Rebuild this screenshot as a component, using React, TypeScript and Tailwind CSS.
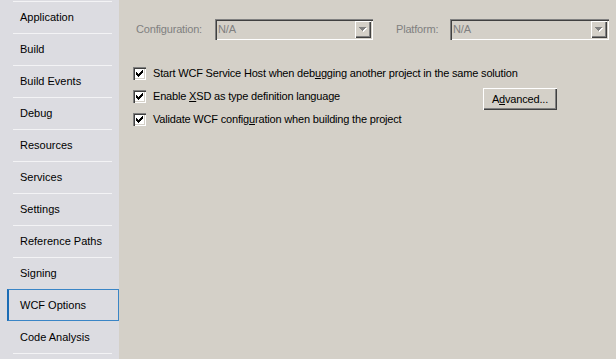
import React from 'react';

const pages = [
  'Application',
  'Build',
  'Build Events',
  'Debug',
  'Resources',
  'Services',
  'Settings',
  'Reference Paths',
  'Signing',
  'WCF Options',
  'Code Analysis',
];

const SELECTED = 'WCF Options';

function Check() {
  // classic 7x7 check bitmap
  const rows = ['......X', '.....XX', 'X...XXX', 'XX.XXX.', 'XXXXX..', '.XXX...', '..X....'];
  return (
    <svg width="7" height="7" viewBox="0 0 7 7" shapeRendering="crispEdges">
      {rows.map((r, y) =>
        r.split('').map((c, x) =>
          c === 'X' ? <rect key={`${x}-${y}`} x={x} y={y} width="1" height="1" fill="#000" /> : null
        )
      )}
    </svg>
  );
}

function CheckBox() {
  return (
    <div className="w-[13px] h-[13px] shrink-0 bg-white flex items-center justify-center shadow-[inset_1px_1px_0_#808080,inset_2px_2px_0_#404040,inset_-1px_-1px_0_#ffffff,inset_-2px_-2px_0_#d4d0c8]">
      <Check />
    </div>
  );
}

function ComboBox({ width }: { width: string }) {
  return (
    <div
      className={`${width} h-[21px] flex items-stretch p-[2px] bg-[#d4d0c8] shadow-[inset_1px_1px_0_#808080,inset_2px_2px_0_#404040,inset_-1px_-1px_0_#ffffff,inset_-2px_-2px_0_#d4d0c8]`}
    >
      <div className="flex-1 flex items-center pl-[1px] text-[#808080]">N/A</div>
      <div className="w-[16px] flex items-center justify-center bg-[#d4d0c8] shadow-[inset_1px_1px_0_#ffffff,inset_-1px_-1px_0_#404040,inset_-2px_-2px_0_#808080]">
        <svg width="8" height="5" viewBox="0 0 8 5" shapeRendering="crispEdges">
          <path d="M1 1h7v1h-1v1h-1v1h-1v1h-1v-1h-1v-1h-1v-1h-1z" fill="#ffffff" />
          <path d="M0 0h7v1h-1v1h-1v1h-1v1h-1v-1h-1v-1h-1v-1h-1z" fill="#808080" />
        </svg>
      </div>
    </div>
  );
}

export default function App() {
  const selIdx = pages.indexOf(SELECTED);

  return (
    <div className="w-[616px] h-[359px] flex overflow-hidden text-[11px] leading-none text-black font-['Liberation_Sans',Arial,sans-serif]">
      {/* Page list */}
      <div className="w-[119px] shrink-0 bg-[#dcdce1] flex flex-col">
        <div className="h-px" />
        {pages.map((name, i) => {
          const selected = i === selIdx;
          const hideSep = i - 1 === selIdx;
          if (selected) {
            return (
              <div
                key={name}
                className="ml-[7px] w-[112px] h-[32px] flex items-center pl-[11px] border border-l-2 border-[#3a85c6] border-l-[#1b6cb5]"
              >
                {name}
              </div>
            );
          }
          return (
            <React.Fragment key={name}>
              <div className={`h-px ml-[13px] w-[99px] ${hideSep ? '' : 'bg-[#f3f3f5]'}`} />
              <div className="h-[31px] flex items-center pl-[20px]">{name}</div>
            </React.Fragment>
          );
        })}
        <div className="h-px ml-[13px] w-[99px] bg-[#f3f3f5]" />
      </div>

      {/* Options panel */}
      <div className="flex-1 bg-[#d4d0c8] pt-[19px] tracking-[-0.18px]">
        <div className="flex items-center pl-[17px]">
          <div className="w-[79px] text-[#808080]">Configuration:</div>
          <ComboBox width="w-[158px]" />
          <div className="ml-[23px] w-[54px] text-[#808080]">Platform:</div>
          <ComboBox width="w-[159px]" />
        </div>

        <div className="mt-[22px] pl-[14px] flex flex-col">
          <div className="h-[23px] flex items-center">
            <CheckBox />
            <span className="ml-[7px]">
              Start WCF Service Host when deb<span className="underline">u</span>gging another project in the same solution
            </span>
          </div>
          <div className="h-[23px] flex items-start">
            <div className="w-[350px] h-[23px] flex items-center">
              <CheckBox />
              <span className="ml-[7px]">
                Enable <span className="underline">X</span>SD as type definition language
              </span>
            </div>
            <button className="mt-[3px] w-[74px] h-[22px] bg-[#d4d0c8] flex items-center justify-center shadow-[inset_1px_1px_0_#ffffff,inset_-1px_-1px_0_#404040,inset_-2px_-2px_0_#808080]">
              A<span className="underline">d</span>vanced...
            </button>
          </div>
          <div className="h-[23px] flex items-center">
            <CheckBox />
            <span className="ml-[7px]">
              Validate WCF config<span className="underline">u</span>ration when building the project
            </span>
          </div>
        </div>
      </div>
    </div>
  );
}
